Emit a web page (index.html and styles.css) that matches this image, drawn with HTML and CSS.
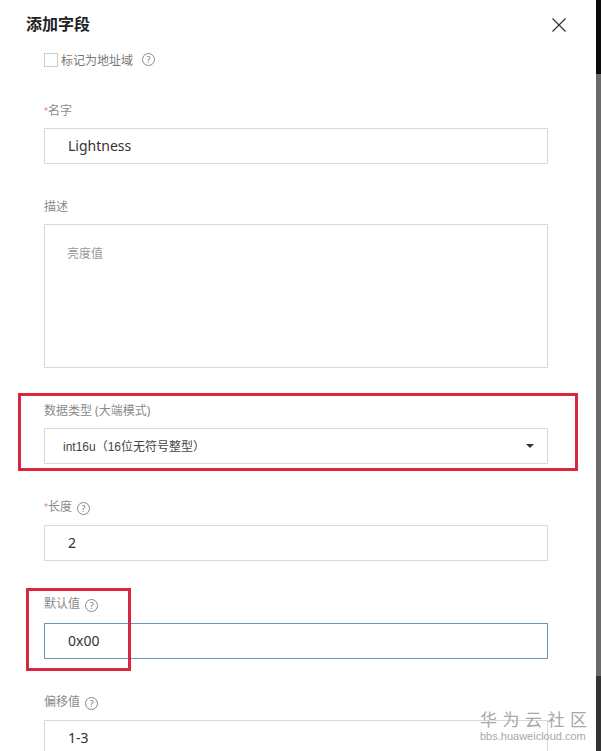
FILE: index.html
```html
<!DOCTYPE html>
<html lang="zh-CN">
<head>
    <meta charset="UTF-8">
    <meta name="viewport" content="width=device-width, initial-scale=1.0">
    <title>添加字段</title>
    <link rel="stylesheet" href="styles.css">
</head>
<body>
    <div class="page">
        <div class="panel">
            <div class="panel-header">
                <h1>添加字段</h1>
                <svg class="btn-cerrar" width="16" height="16" viewBox="0 0 16 16">
                    <path d="M1.5 1.5L14.5 14.5M14.5 1.5L1.5 14.5" stroke="#333" stroke-width="1.2" fill="none"/>
                </svg>
            </div>

            <div class="panel-body">
                <div class="check-row">
                    <span class="checkbox"></span>
                    <span class="check-label">标记为地址域</span>
                    <span class="help help-check">?</span>
                </div>

                <div class="field">
                    <div class="field-label"><span class="req">*</span>名字</div>
                    <div class="input">Lightness</div>
                </div>

                <div class="field">
                    <div class="field-label">描述</div>
                    <div class="input textarea">亮度值</div>
                </div>

                <div class="field">
                    <div class="field-label">数据类型 (大端模式)</div>
                    <div class="input select">
                        <span>int16u（16位无符号整型）</span>
                        <span class="caret"></span>
                    </div>
                </div>

                <div class="field field-help">
                    <div class="field-label"><span class="req">*</span>长度 <span class="help">?</span></div>
                    <div class="input">2</div>
                </div>

                <div class="field field-help">
                    <div class="field-label">默认值 <span class="help">?</span></div>
                    <div class="input focus">0x00</div>
                </div>

                <div class="field field-help">
                    <div class="field-label">偏移值 <span class="help">?</span></div>
                    <div class="input">1-3</div>
                </div>
            </div>
        </div>
        <div class="scrollbar">
            <div class="scroll-top"></div>
            <div class="scroll-thumb"></div>
            <div class="scroll-bottom"></div>
        </div>
    </div>

    <!-- marcas rojas y marca de agua encima del formulario -->
    <div class="mark mark-tipo"></div>
    <div class="mark mark-default"></div>
    <div class="watermark">
        <div class="wm-title">华为云社区</div>
        <div class="wm-url">bbs.huaweicloud.com</div>
    </div>
</body>
</html>
```

FILE: styles.css
```css
html, body {
    margin: 0;
    padding: 0;
    height: 751px;
    overflow: hidden;
    background: #fff;
}
body {
    font-family: 'Noto Sans', 'Noto Sans CJK SC', sans-serif;
    color: #333;
    position: relative;
}
.page {
    display: flex;
    height: 751px;
}
.panel {
    flex: 1;
    overflow: hidden;
}
.panel-header {
    display: flex;
    justify-content: space-between;
    align-items: center;
    padding: 14px 29px 0 26px;
    height: 20px;
}
.panel-header h1 {
    margin: 0;
    font-size: 16px;
    font-weight: 700;
    line-height: 20px;
    color: #222;
}
.btn-cerrar {
    margin-top: 2px;
}
.panel-body {
    padding: 19px 48px 0 44px;
}
.check-row {
    display: flex;
    align-items: center;
    height: 13px;
    margin-bottom: 34px;
}
.checkbox {
    width: 12px;
    height: 12px;
    border: 1px solid #ccc;
    margin-right: 3px;
}
.check-label {
    font-size: 12px;
    color: #777;
}
.help {
    display: inline-flex;
    align-items: center;
    justify-content: center;
    width: 11px;
    height: 11px;
    border: 1px solid #888;
    border-radius: 50%;
    font-size: 9px;
    line-height: 1;
    color: #777;
    margin-left: 2px;
    vertical-align: -1px;
}
.help-check {
    margin-left: 9px;
}
.field {
    margin-bottom: 32px;
}
.field-label {
    height: 18px;
    line-height: 22px;
    font-size: 12px;
    color: #8a8a8a;
    margin-bottom: 10px;
}
.field-help .field-label {
    height: 19.4px;
}
.req {
    font-family: 'Liberation Sans', sans-serif;
    font-size: 10px;
    color: #d98a90;
}
.input {
    box-sizing: border-box;
    height: 36px;
    border: 1px solid #d9d9d9;
    padding: 0 23px;
    font-size: 14px;
    line-height: 34px;
    color: #333;
}
.textarea {
    height: 144px;
    padding: 12px 22px 0;
    font-size: 12px;
    line-height: 34px;
    color: #999;
}
.select {
    display: flex;
    justify-content: space-between;
    align-items: center;
    padding: 2px 13px 0 18px;
    font-family: 'Liberation Sans', 'Noto Sans CJK SC', sans-serif;
    font-size: 12px;
    color: #444;
}
.caret {
    width: 0;
    height: 0;
    border-left: 4px solid transparent;
    border-right: 4px solid transparent;
    border-top: 4px solid #333;
    margin-bottom: 2px;
}
.focus {
    border-color: #6d94b4;
}
.scrollbar {
    width: 5px;
    display: flex;
    flex-direction: column;
}
.scroll-top {
    height: 74px;
    background: #0b0b0d;
}
.scroll-thumb {
    flex: 1;
    background: #6a6a6a;
}
.scroll-bottom {
    height: 75px;
    background: #333;
}
.mark {
    position: absolute;
    box-sizing: border-box;
    border: 3px solid #d7263d;
}
.mark-tipo {
    left: 18px;
    top: 393px;
    width: 560px;
    height: 78px;
}
.mark-default {
    left: 26px;
    top: 588px;
    width: 105px;
    height: 83px;
}
.watermark {
    position: absolute;
    left: 480px;
    top: 711px;
    color: #a8a8a8;
}
.wm-title {
    font-size: 17px;
    line-height: 18px;
    letter-spacing: 5.5px;
    margin-bottom: 1px;
}
.wm-url {
    font-family: 'Liberation Sans', sans-serif;
    font-size: 11px;
    line-height: 13px;
    white-space: nowrap;
}
```
